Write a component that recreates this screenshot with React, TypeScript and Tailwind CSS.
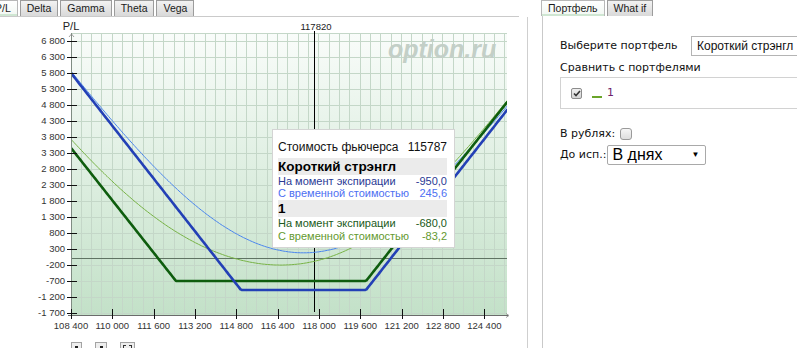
import React from 'react';

// chart geometry (page pixels)
const PLOT_L = 71;
const PLOT_R = 507;
const PLOT_T = 33;
const PLOT_B = 315;

const yOf = (v: number) => 41 + (6800 - v) * 0.032;
const xOf = (v: number) => PLOT_L + (v - 108400) * (41.33 / 1600);

const yTicks = Array.from({ length: 18 }, (_, i) => 6800 - 500 * i);
const xTicks = Array.from({ length: 11 }, (_, i) => 108400 + 1600 * i);

const fmt = (v: number) => {
  const s = Math.abs(v).toString().replace(/\B(?=(\d{3})+(?!\d))/g, ' ');
  return v < 0 ? '-' + s : s;
};

const erf = (x: number) => {
  const t = 1 / (1 + 0.3275911 * Math.abs(x));
  const y =
    1 -
    ((((1.061405429 * t - 1.453152027) * t + 1.421413741) * t - 0.284496736) * t + 0.254829592) *
      t *
      Math.exp(-x * x);
  return x >= 0 ? y : -y;
};
const Phi = (z: number) => 0.5 * (1 + erf(z / Math.SQRT2));
const phi = (z: number) => Math.exp((-z * z) / 2) / Math.sqrt(2 * Math.PI);
const leg = (d: number, s: number) => d * Phi(d / s) + s * phi(d / s);

// payoff curve in pixel space; sl/sr = smoothing of each leg (time value), 0 = expiration
function curve(a: number, b: number, floor: number, k: number, sl: number, sr: number) {
  const pts: string[] = [];
  for (let x = PLOT_L; x <= PLOT_R + 1; x += 1.5) {
    const h = sl ? leg(a - x, sl) + leg(x - b, sr) : Math.max(0, a - x) + Math.max(0, x - b);
    pts.push(`${x.toFixed(1)},${(floor - k * h).toFixed(1)}`);
  }
  return 'M' + pts.join(' L');
}

const tabs = ['P/L', 'Delta', 'Gamma', 'Theta', 'Vega'];

function Tab({ label, active }: { label: string; active?: boolean }) {
  return (
    <div
      className={`flex h-[16px] items-center border border-b-0 px-[6px] font-['Liberation_Sans',Arial,sans-serif] text-[10.5px] leading-none text-[#1a1a1a] ${
        active
          ? 'border-[#b8b8b8] bg-gradient-to-b from-white to-[#f1f7f2] shadow-[inset_0_-2px_0_#cfe6d2]'
          : 'border-[#9c9c9c] bg-gradient-to-b from-[#f2f2f2] to-[#d9d9d9]'
      }`}
    >
      {label}
    </div>
  );
}

function Chart() {
  const vGrid = Array.from({ length: 43 }, (_, i) => PLOT_L + i * 10.333);
  return (
    <svg width={527} height={325} viewBox="0 17 527 325" className="block shrink-0">
      <defs>
        <linearGradient id="bg" x1="0" y1="0" x2="0" y2="1">
          <stop offset="0" stopColor="#f9fcfa" />
          <stop offset="1" stopColor="#c3e1c8" />
        </linearGradient>
        <clipPath id="plot">
          <rect x={PLOT_L} y={PLOT_T} width={PLOT_R - PLOT_L} height={PLOT_B - PLOT_T} />
        </clipPath>
      </defs>

      <rect x={PLOT_L} y={PLOT_T} width={PLOT_R - PLOT_L} height={PLOT_B - PLOT_T} fill="url(#bg)" />

      {/* grid */}
      <g stroke="#c4d7c8" strokeWidth={1} shapeRendering="crispEdges">
        {vGrid.map((x) => (
          <line key={x} x1={x} x2={x} y1={PLOT_T} y2={PLOT_B} />
        ))}
        <line x1={PLOT_L} x2={PLOT_R} y1={PLOT_T} y2={PLOT_T} />
        {yTicks.map((v) => (
          <line key={v} x1={PLOT_L} x2={PLOT_R} y1={yOf(v)} y2={yOf(v)} />
        ))}
      </g>

      {/* watermark */}
      <text
        x={388}
        y={58}
        fontFamily="Liberation Sans, Arial, sans-serif"
        fontWeight={700}
        fontStyle="italic"
        fontSize={25}
        fill="#c3cfc7"
      >
        option.ru
      </text>

      {/* zero line */}
      <line x1={PLOT_L} x2={PLOT_R} y1={258.5} y2={258.5} stroke="#5f7463" strokeWidth={1} shapeRendering="crispEdges" />

      {/* current price */}
      <line x1={314.5} x2={314.5} y1={31} y2={312} stroke="#000" strokeWidth={1} shapeRendering="crispEdges" />
      <text x={316} y={30} textAnchor="middle" fontFamily="Liberation Sans, Arial, sans-serif" fontSize={9.5} fill="#222">
        117820
      </text>

      <g clipPath="url(#plot)" fill="none" strokeLinejoin="round">
        <path d={curve(176, 366, 281, 1.267, 97, 79)} stroke="#78b346" strokeWidth={1} />
        <path d={curve(241, 366, 290, 1.276, 95, 95)} stroke="#4b86ee" strokeWidth={1} />
        <path d={curve(176, 366, 281, 1.267, 0, 0)} stroke="#0e5d0e" strokeWidth={2.6} />
        <path d={curve(241, 366, 290, 1.276, 0, 0)} stroke="#2340b6" strokeWidth={2.6} />
      </g>

      {/* axes */}
      <line x1={71.5} x2={71.5} y1={PLOT_T} y2={318} stroke="#7f8c82" strokeWidth={1} shapeRendering="crispEdges" />
      <path d="M69,37 L71.5,34 L74,37" fill="none" stroke="#888" strokeWidth={0.8} />
      <line x1={68} x2={PLOT_R + 1} y1={315.5} y2={315.5} stroke="#6b6b6b" strokeWidth={1} shapeRendering="crispEdges" />
      <path d="M506,313.5 L509,315.5 L506,317.5" fill="none" stroke="#888" strokeWidth={0.8} />

      <text x={71} y={30} textAnchor="middle" fontFamily="Liberation Sans, Arial, sans-serif" fontSize={11} fill="#222">
        P/L
      </text>

      <g fontFamily="Liberation Sans, Arial, sans-serif" fontSize={9.5} fill="#333">
        {yTicks.map((v) => (
          <g key={v}>
            <line x1={67} x2={77} y1={Math.round(yOf(v)) + 0.5} y2={Math.round(yOf(v)) + 0.5} stroke="#111" strokeWidth={1} />
            <text x={65} y={yOf(v) + 3.4} textAnchor="end">
              {fmt(v)}
            </text>
          </g>
        ))}
        {xTicks.map((v) => (
          <g key={v}>
            <line x1={Math.round(xOf(v)) + 0.5} x2={Math.round(xOf(v)) + 0.5} y1={309} y2={319} stroke="#111" strokeWidth={1} />
            <text x={xOf(v)} y={329} textAnchor="middle">
              {fmt(v)}
            </text>
          </g>
        ))}
      </g>
    </svg>
  );
}

function Tooltip() {
  return (
    <div className="absolute left-[272px] top-[129px] h-[119px] w-[183px] whitespace-nowrap border border-[#d4d4d4] bg-white pl-[5px] pr-[7px] font-['Liberation_Sans',Arial,sans-serif] text-[11px] leading-none">
      <div className="mt-[10px] flex h-[13px] items-center justify-between text-[12px] text-[#111]">
        <span>Стоимость фьючерса</span>
        <span>115787</span>
      </div>
      <div className="mt-[5px] flex h-[17px] items-center bg-[#ebebeb] text-[13.5px] font-bold text-black">
        Короткий стрэнгл
      </div>
      <div className="flex h-[12.5px] items-center justify-between text-[#2a3a94]">
        <span>На момент экспирации</span>
        <span>-950,0</span>
      </div>
      <div className="flex h-[12.5px] items-center justify-between text-[#4d6ff2]">
        <span>С временной стоимостью</span>
        <span>245,6</span>
      </div>
      <div className="flex h-[17px] items-center bg-[#ebebeb] text-[13.5px] font-bold text-black">1</div>
      <div className="flex h-[13px] items-center justify-between text-[#205a20]">
        <span>На момент экспирации</span>
        <span>-680,0</span>
      </div>
      <div className="flex h-[13px] items-center justify-between text-[#64992f]">
        <span>С временной стоимостью</span>
        <span>-83,2</span>
      </div>
    </div>
  );
}

export default function App() {
  return (
    <div className="flex h-[348px] w-[797px] overflow-hidden bg-white font-['DejaVu_Sans',Verdana,sans-serif]">
      {/* Left: chart */}
      <div className="relative flex w-[527px] shrink-0 flex-col">
        <div className="ml-[-12px] flex h-[16px] shrink-0 gap-[2px]">
          {tabs.map((t, i) => (
            <Tab key={t} label={t} active={i === 0} />
          ))}
        </div>
        <div className="h-px w-[519px] shrink-0 bg-[#cacaca]" />
        <Chart />
        <div className="flex shrink-0 gap-[13px] pl-[71px]">
          <div className="flex h-[14px] w-[11px] justify-center border border-[#a3a3a3] bg-[#eeeeee] pt-[3px]">
            <div className="h-[3px] w-[3px] bg-[#222]" />
          </div>
          <div className="flex h-[14px] w-[12px] justify-center border border-[#a3a3a3] bg-[#eeeeee] pt-[3px]">
            <div className="h-[3px] w-[3px] bg-[#222]" />
          </div>
          <div className="flex h-[14px] w-[15px] justify-center border border-[#a3a3a3] bg-[#eeeeee] pt-[2px]">
            <div className="h-[6px] w-[9px] border border-dashed border-[#333]" />
          </div>
        </div>
        <Tooltip />
      </div>

      {/* separator */}
      <div className="mt-[17px] w-px shrink-0 bg-[#cfcfcf]" />

      {/* Right: portfolio settings */}
      <div className="ml-[13px] flex flex-1 flex-col text-[11px] text-[#111]">
        <div className="flex h-[16px] gap-[2px]">
          <Tab label="Портфель" active />
          <Tab label="What if" />
        </div>
        <div className="ml-px flex-1 border-l border-[#c9c9c9] pl-[17px] pt-[20px]">
          <div className="flex h-[20px] items-center">
            <span className="w-[131px] whitespace-nowrap">Выберите портфель</span>
            <div className="flex h-[20px] w-[130px] shrink-0 items-center whitespace-nowrap border border-[#b4b4b4] pl-[5px] font-['Liberation_Sans',Arial,sans-serif] text-[12px]">
              Короткий стрэнгл
            </div>
          </div>
          <div className="mt-[5px] h-[14px] whitespace-nowrap leading-[14px]">Сравнить с портфелями</div>
          <div className="mr-[-20px] mt-[2px] flex h-[32px] items-center border border-[#d2d2d2] pl-[10px]">
            <div className="flex h-[11px] w-[11px] items-center justify-center rounded-[2px] border border-[#8c8c8c] bg-gradient-to-b from-[#f0f0f0] to-[#d4d4d4]">
              <svg width="8" height="7" viewBox="0 0 8 7">
                <path d="M1 3.5 L3 5.5 L7 1" fill="none" stroke="#333" strokeWidth="1.6" />
              </svg>
            </div>
            <div className="ml-[10px] mt-[8px] h-[2px] w-[10px] bg-[#6aa52a]" />
            <span className="ml-[5px] text-[#6e1f6e]">1</span>
          </div>
          <div className="mt-[18px] flex h-[14px] items-center">
            <span>В рублях:</span>
            <div className="ml-[5px] h-[12px] w-[12px] rounded-[3px] border border-[#9a9a9a] bg-gradient-to-b from-[#f6f6f6] to-[#dedede]" />
          </div>
          <div className="mt-[4px] flex h-[20px] items-center">
            <span>До исп.:</span>
            <div className="ml-px flex h-[20px] w-[99px] items-center justify-between rounded-[2px] border border-[#a9a9a9] pl-[4px] pr-[6px] font-['Liberation_Sans',Arial,sans-serif]">
              <span className="text-[16px] text-black">В днях</span>
              <span className="text-[8px] text-black">▼</span>
            </div>
          </div>
        </div>
      </div>
    </div>
  );
}
